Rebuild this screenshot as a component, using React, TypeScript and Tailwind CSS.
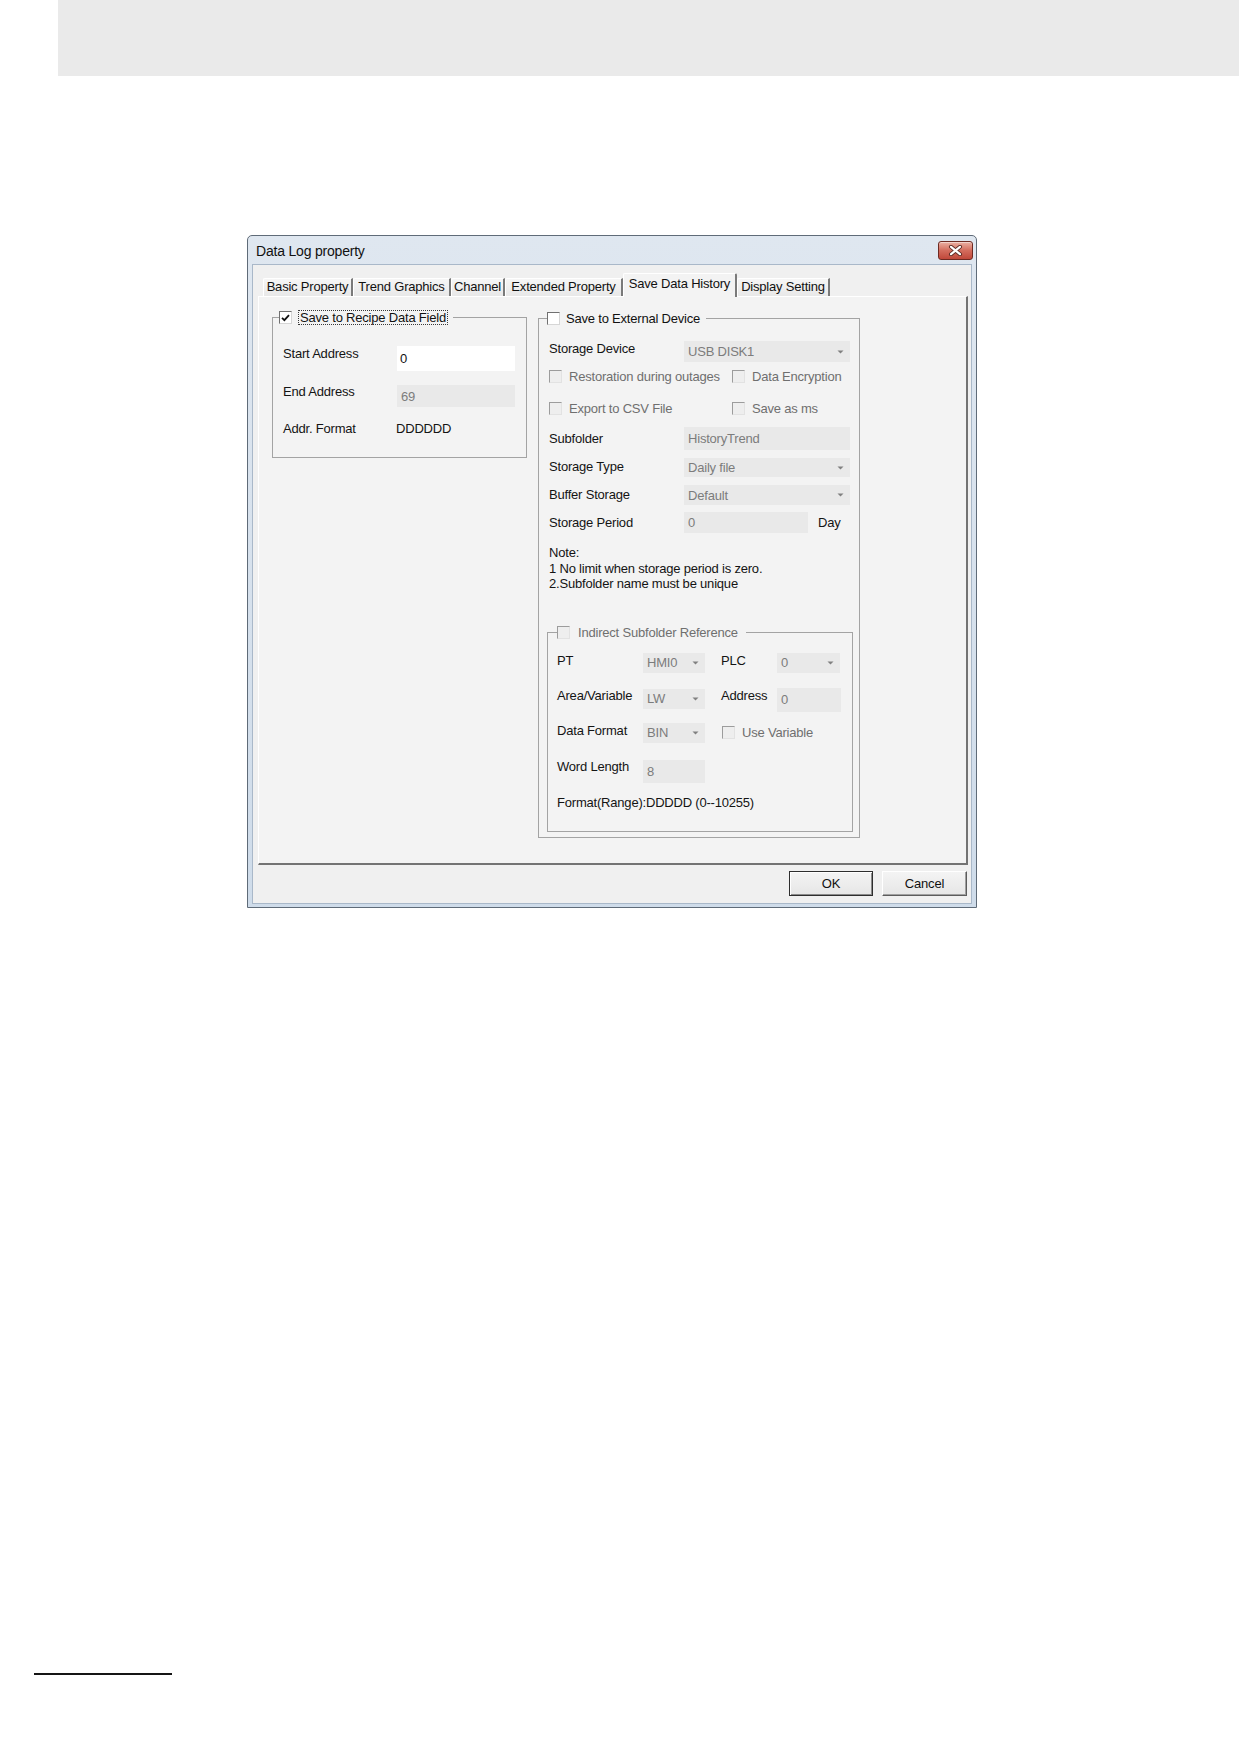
import React from "react";

type Kids = { children?: React.ReactNode; className?: string };

// Small down-pointing triangle used by the combo boxes
const Arrow = () => (
  <svg width="7" height="4" viewBox="0 0 7 4" className="shrink-0">
    <path d="M0.5 0.5h6L3.5 3.5z" fill="#808080" />
  </svg>
);

function Combo({ value, className = "" }: { value: string; className?: string }) {
  return (
    <div className={`flex items-center justify-between bg-[#e9e9e9] pl-[4px] pr-[6px] text-[#7c7c7c] ${className}`}>
      <span className="leading-[15px]">{value}</span>
      <Arrow />
    </div>
  );
}

function Field({ value, className = "" }: { value: string; className?: string }) {
  return (
    <div className={`flex items-center bg-[#e9e9e9] pl-[4px] text-[#7c7c7c] ${className}`}>
      <span className="leading-[15px]">{value}</span>
    </div>
  );
}

function Check({ checked = false, disabled = false }: { checked?: boolean; disabled?: boolean }) {
  if (disabled) {
    return (
      <span className="inline-block w-[13px] h-[13px] shrink-0 border border-t-[#9c9c9c] border-l-[#9c9c9c] border-r-[#e2e2e2] border-b-[#e2e2e2] bg-[#eeeeee]" />
    );
  }
  return (
    <span className="inline-flex items-center justify-center w-[13px] h-[13px] shrink-0 border border-t-[#707070] border-l-[#707070] border-r-[#d6d6d6] border-b-[#d6d6d6] bg-white">
      {checked && (
        <svg width="9" height="8" viewBox="0 0 9 8">
          <path d="M1 3.8 L3.4 6.2 L8 1.2" stroke="#111" strokeWidth="1.8" fill="none" />
        </svg>
      )}
    </span>
  );
}

function Label({ children, className = "" }: Kids) {
  return <span className={`shrink-0 leading-[15px] text-[#141414] ${className}`}>{children}</span>;
}

function GrayCheck({ label, className = "" }: { label: string; className?: string }) {
  return (
    <div className={`flex items-center h-[13px] ${className}`}>
      <Check disabled />
      <span className="ml-[7px] leading-[15px] text-[#6f6f6f]">{label}</span>
    </div>
  );
}

const tabs = [
  { label: "Basic Property", cls: "w-[90px]" },
  { label: "Trend Graphics", cls: "w-[98px]" },
  { label: "Channel", cls: "w-[54px]" },
  { label: "Extended Property", cls: "w-[118px]" },
];

function Tab({ label, cls }: { label: string; cls: string }) {
  return (
    <div
      className={`${cls} h-[18px] flex items-center justify-center pb-[2px] border-t border-l border-t-white border-l-white border-r-2 border-r-[#7a7a7a] bg-gradient-to-b from-[#f6f6f6] to-[#e8e8e8] rounded-tl-[2px] text-[#111] leading-[15px] whitespace-nowrap`}
    >
      {label}
    </div>
  );
}

export default function App() {
  return (
    <div className="w-[1239px] h-[1754px] bg-white overflow-hidden font-['Liberation_Sans',Arial,sans-serif]">
      <div className="ml-[58px] h-[76px] bg-[#eaeaea]" />

      {/* Data Log property dialog */}
      <div className="ml-[247px] mt-[159px] w-[730px] h-[673px] flex flex-col border border-[#5f6b78] rounded-t-[5px] bg-gradient-to-b from-[#dfe7f0] to-[#cfdcea] text-[13px] tracking-[-0.2px]">
        <div className="h-[28px] flex items-start justify-between pl-[8px] pr-[3px] shrink-0">
          <span className="mt-[7px] text-[14px] leading-[16px] text-[#111]">Data Log property</span>
          <div className="mt-[5px] w-[35px] h-[19px] flex items-center justify-center rounded-[3px] border border-[#6e2a22] bg-gradient-to-b from-[#eab0a3] via-[#d36c5d] to-[#c0473a] shadow-[inset_0_1px_0_rgba(255,255,255,0.45)]">
            <svg width="15" height="11" viewBox="0 0 15 11">
              <path d="M3 1.8 L12 9.2 M12 1.8 L3 9.2" stroke="#5a2a24" strokeWidth="4" strokeLinecap="round" />
              <path d="M3 1.8 L12 9.2 M12 1.8 L3 9.2" stroke="#ffffff" strokeWidth="2.2" strokeLinecap="round" />
            </svg>
          </div>
        </div>

        <div className="mx-[4px] mb-[3px] flex-1 flex flex-col border border-[#a9b8c9] bg-[#f0f0f0]">
          {/* tab strip */}
          <div className="mt-[8px] h-[23px] pl-[10px] flex items-end">
            {tabs.map((t) => (
              <Tab key={t.label} label={t.label} cls={t.cls} />
            ))}
            <div className="relative z-10 -mb-px w-[114px] h-[24px] flex items-center justify-center pb-[4px] border-t border-l border-t-white border-l-white border-r-2 border-r-[#7a7a7a] bg-[#f3f3f3] rounded-t-[2px] text-[#111] leading-[15px] whitespace-nowrap">
              Save Data History
            </div>
            <Tab label="Display Setting" cls="w-[93px]" />
          </div>

          {/* tab page */}
          <div className="ml-[5px] w-[710px] h-[569px] shrink-0 border-t border-l border-t-white border-l-white border-r-2 border-b-2 border-r-[#737373] border-b-[#737373] bg-[#f3f3f3] pl-[13px] pt-[13px] flex items-start gap-[11px]">
            {/* Save to Recipe Data Field */}
            <fieldset className="w-[255px] h-[148px] border border-[#a3a3a3] shrink-0">
              <legend className="ml-[6px] pr-[5px] h-[15px]">
                <span className="flex items-center h-[15px]">
                  <Check checked />
                  <span className="ml-[6px] px-[1px] border border-dotted border-[#3a3a3a] leading-[13px] text-[#111]">
                    Save to Recipe Data Field
                  </span>
                </span>
              </legend>
              <div className="pl-[10px]">
                <div className="mt-[21px] h-[25px] flex items-start">
                  <Label className="w-[114px]">Start Address</Label>
                  <div className="w-[118px] h-[25px] bg-white flex items-center pl-[3px] text-[#111]">
                    <span className="leading-[15px]">0</span>
                  </div>
                </div>
                <div className="mt-[13px] h-[23px] flex items-start">
                  <Label className="w-[114px]">End Address</Label>
                  <Field value="69" className="mt-[1px] w-[118px] h-[22px]" />
                </div>
                <div className="mt-[14px] flex items-start">
                  <Label className="w-[113px]">Addr. Format</Label>
                  <Label>DDDDDD</Label>
                </div>
              </div>
            </fieldset>

            {/* Save to External Device */}
            <fieldset className="mt-[1px] w-[322px] h-[527px] border border-[#a3a3a3] shrink-0">
              <legend className="ml-[8px] pr-[6px] h-[15px]">
                <span className="flex items-center h-[15px]">
                  <Check />
                  <span className="ml-[6px] leading-[15px] text-[#111]">Save to External Device</span>
                </span>
              </legend>
              <div className="pl-[10px]">
                <div className="mt-[15px] h-[21px] flex items-start">
                  <Label className="w-[135px]">Storage Device</Label>
                  <Combo value="USB DISK1" className="w-[166px] h-[21px]" />
                </div>
                <div className="mt-[8px] h-[13px] flex items-center">
                  <GrayCheck label="Restoration during outages" className="w-[183px]" />
                  <GrayCheck label="Data Encryption" />
                </div>
                <div className="mt-[19px] h-[13px] flex items-center">
                  <GrayCheck label="Export to CSV File" className="w-[183px]" />
                  <GrayCheck label="Save as ms" />
                </div>
                <div className="mt-[12px] h-[23px] flex items-start">
                  <Label className="w-[135px] pt-[4px]">Subfolder</Label>
                  <Field value="HistoryTrend" className="w-[166px] h-[23px]" />
                </div>
                <div className="mt-[8px] h-[19px] flex items-start">
                  <Label className="w-[135px] pt-[1px]">Storage Type</Label>
                  <Combo value="Daily file" className="w-[166px] h-[19px]" />
                </div>
                <div className="mt-[8px] h-[20px] flex items-start">
                  <Label className="w-[135px] pt-[2px]">Buffer Storage</Label>
                  <Combo value="Default" className="w-[166px] h-[20px]" />
                </div>
                <div className="mt-[7px] h-[21px] flex items-start">
                  <Label className="w-[135px] pt-[3px]">Storage Period</Label>
                  <Field value="0" className="w-[124px] h-[21px]" />
                  <Label className="ml-[10px] pt-[3px]">Day</Label>
                </div>
                <div className="mt-[12px] leading-[15.5px] text-[#141414]">
                  <div>Note:</div>
                  <div>1 No limit when storage period is zero.</div>
                  <div>2.Subfolder name must be unique</div>
                </div>

                {/* Indirect Subfolder Reference */}
                <fieldset className="mt-[34px] -ml-[2px] w-[306px] h-[206px] border border-[#a3a3a3]">
                  <legend className="ml-[9px] pr-[8px] h-[14px]">
                    <span className="flex items-center h-[14px]">
                      <Check disabled />
                      <span className="ml-[8px] leading-[15px] text-[#6f6f6f]">Indirect Subfolder Reference</span>
                    </span>
                  </legend>
                  <div className="pl-[9px]">
                    <div className="mt-[13px] h-[20px] flex items-start">
                      <Label className="w-[86px]">PT</Label>
                      <Combo value="HMI0" className="w-[62px] h-[20px]" />
                      <Label className="ml-[16px] w-[56px]">PLC</Label>
                      <Combo value="0" className="w-[63px] h-[20px]" />
                    </div>
                    <div className="mt-[15px] h-[24px] flex items-start">
                      <Label className="w-[86px]">Area/Variable</Label>
                      <Combo value="LW" className="w-[62px] h-[20px] mt-[1px]" />
                      <Label className="ml-[16px] w-[56px]">Address</Label>
                      <Field value="0" className="w-[64px] h-[24px]" />
                    </div>
                    <div className="mt-[11px] h-[20px] flex items-start">
                      <Label className="w-[86px]">Data Format</Label>
                      <Combo value="BIN" className="w-[62px] h-[20px]" />
                      <GrayCheck label="Use Variable" className="ml-[17px] mt-[3px]" />
                    </div>
                    <div className="mt-[16px] h-[24px] flex items-start">
                      <Label className="w-[86px]">Word Length</Label>
                      <Field value="8" className="mt-[1px] w-[62px] h-[23px]" />
                    </div>
                    <div className="mt-[12px] leading-[15px] text-[#141414]">Format(Range):DDDDD (0--10255)</div>
                  </div>
                </fieldset>
              </div>
            </fieldset>
          </div>

          {/* dialog buttons */}
          <div className="mt-[6px] pr-[4px] flex justify-end gap-[9px]">
            <div className="w-[84px] h-[25px] flex items-center justify-center border border-[#2e2e2e] bg-gradient-to-b from-[#f4f4f4] to-[#e6e6e6] shadow-[inset_1px_1px_0_#ffffff,inset_-1px_-1px_0_#8a8a8a] text-[#111]">
              OK
            </div>
            <div className="w-[85px] h-[25px] flex items-center justify-center border border-t-white border-l-white border-r-[#5c5c5c] border-b-[#5c5c5c] bg-gradient-to-b from-[#f4f4f4] to-[#e6e6e6] shadow-[inset_-1px_-1px_0_#a0a0a0] text-[#111]">
              Cancel
            </div>
          </div>
        </div>
      </div>

      <div className="ml-[34px] mt-[765px] w-[138px] h-[2px] bg-[#151515]" />
    </div>
  );
}
